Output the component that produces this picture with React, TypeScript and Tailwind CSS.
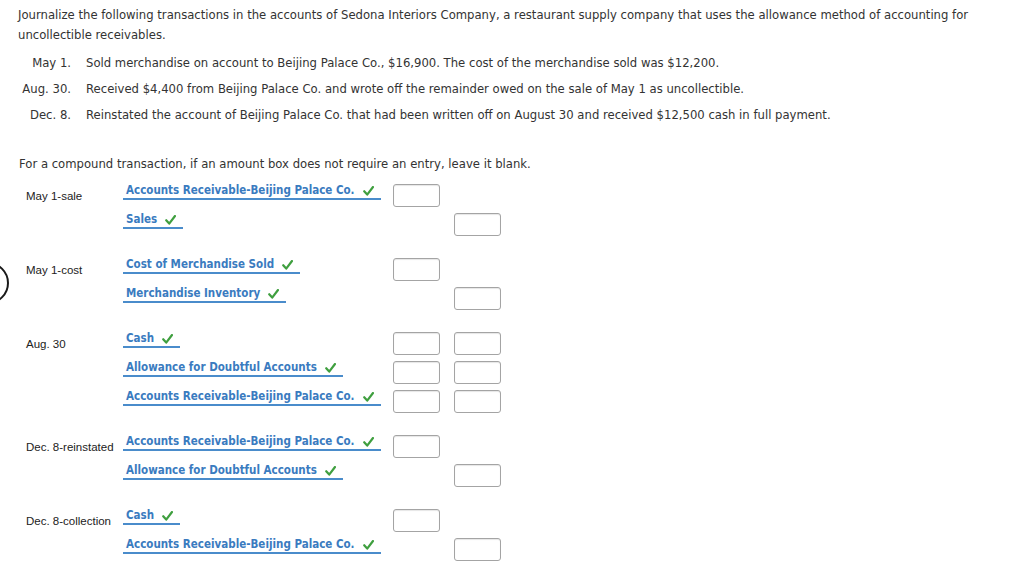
import React from "react";

const V = { fontFamily: '"DejaVu Sans", Verdana, sans-serif' };
const VC = { fontFamily: '"DejaVu Sans Condensed", "DejaVu Sans", Verdana, sans-serif' };
const L = { fontFamily: '"Liberation Sans", Arial, sans-serif' };

function Check() {
  return (
    <svg width="11" height="10" viewBox="0 0 11 10" className="ml-[8px] mb-[1px] shrink-0">
      <path d="M1.2 5.2 L4.2 8.6 L10 1" fill="none" stroke="#3f9f3f" strokeWidth="2.2" strokeLinecap="round" strokeLinejoin="round" />
    </svg>
  );
}

function Box() {
  return <div className="w-[47px] h-[23px] rounded-[3px] border border-[#a4a4a4] bg-white shadow-[inset_0_1px_1px_rgba(0,0,0,0.1)]" />;
}

type Row = { acct: string; c1: boolean; c2: boolean };
type Group = { label: string; rows: Row[] };

const AR = "Accounts Receivable-Beijing Palace Co.";
const AFD = "Allowance for Doubtful Accounts";

const groups: Group[] = [
  { label: "May 1-sale", rows: [{ acct: AR, c1: true, c2: false }, { acct: "Sales", c1: false, c2: true }] },
  { label: "May 1-cost", rows: [{ acct: "Cost of Merchandise Sold", c1: true, c2: false }, { acct: "Merchandise Inventory", c1: false, c2: true }] },
  {
    label: "Aug. 30",
    rows: [
      { acct: "Cash", c1: true, c2: true },
      { acct: AFD, c1: true, c2: true },
      { acct: AR, c1: true, c2: true },
    ],
  },
  { label: "Dec. 8-reinstated", rows: [{ acct: AR, c1: true, c2: false }, { acct: AFD, c1: false, c2: true }] },
  { label: "Dec. 8-collection", rows: [{ acct: "Cash", c1: true, c2: false }, { acct: AR, c1: false, c2: true }] },
];

const txns = [
  ["May 1.", "Sold merchandise on account to Beijing Palace Co., $16,900. The cost of the merchandise sold was $12,200."],
  ["Aug. 30.", "Received $4,400 from Beijing Palace Co. and wrote off the remainder owed on the sale of May 1 as uncollectible."],
  ["Dec. 8.", "Reinstated the account of Beijing Palace Co. that had been written off on August 30 and received $12,500 cash in full payment."],
];

export default function App() {
  return (
    <div className="relative w-[1024px] h-[566px] overflow-hidden bg-white flex flex-col">
      <div className="flex-1 text-[#333]">
        <p className="pl-[18px] pt-[5px] pr-[30px] text-[11.65px] leading-[20px]" style={V}>
          Journalize the following transactions in the accounts of Sedona Interiors Company, a restaurant supply company that uses the allowance method of accounting for uncollectible receivables.
        </p>
        <div className="mt-[5px] flex flex-col text-[11.65px] leading-[26px]" style={V}>
          {txns.map(([d, t]) => (
            <div key={d} className="flex">
              <div className="w-[71px] text-right shrink-0">{d}</div>
              <div className="ml-[15px] whitespace-nowrap">{t}</div>
            </div>
          ))}
        </div>
        <p className="mt-[26px] pl-[19px] text-[11.65px] leading-[20px]" style={V}>
          For a compound transaction, if an amount box does not require an entry, leave it blank.
        </p>
        <div className="mt-[10px] flex flex-col gap-[16px]">
          {groups.map((g) => (
            <div key={g.label} className="flex">
              <div className="w-[123px] shrink-0 pl-[26px] pt-[4px] text-[11.5px] leading-[16px] text-[#222]" style={L}>
                {g.label}
              </div>
              <div className="flex flex-col">
                {g.rows.map((r, i) => (
                  <div key={i} className="flex h-[29px] items-start">
                    <div className="w-[270px] shrink-0 flex items-start">
                      <span
                        className="flex items-end whitespace-nowrap border-b-2 border-[#4a8ccb] pl-[3px] pr-[7px] pb-[1px] text-[11.5px] leading-[13px] font-bold text-[#3a7bbf]"
                        style={VC}
                      >
                        {r.acct}
                        <Check />
                      </span>
                    </div>
                    <div className="w-[47px] shrink-0">{r.c1 && <Box />}</div>
                    <div className="ml-[14px] w-[47px] shrink-0">{r.c2 && <Box />}</div>
                  </div>
                ))}
              </div>
            </div>
          ))}
        </div>
      </div>
      <div className="h-[4px] bg-gradient-to-b from-[#d6d6d6] to-[#ececec]" />
      <div className="absolute left-[-33px] top-[262px] w-[42px] h-[42px] rounded-full border-2 border-[#1a1a1a]" />
    </div>
  );
}
